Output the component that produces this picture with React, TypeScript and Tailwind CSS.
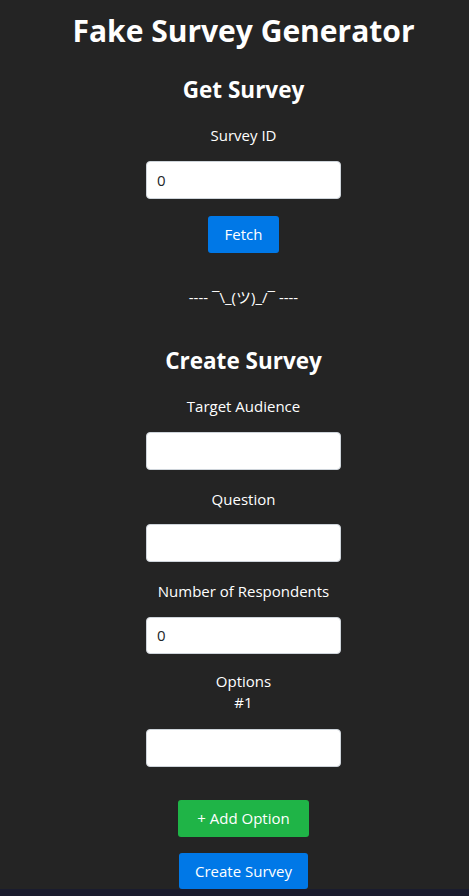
import React from "react";

const font = { fontFamily: '"Open Sans", "Noto Sans CJK JP", sans-serif' };

function Label({ children, className = "" }: { children: React.ReactNode; className?: string }) {
  return <div className={`text-[15px] leading-[22px] text-white ${className}`}>{children}</div>;
}

function Input({ value = "", className = "" }: { value?: string; className?: string }) {
  return (
    <input
      readOnly
      value={value}
      className={`w-[195px] h-[38px] rounded-[4px] border border-[#ced4da] bg-white px-[10px] text-[15px] text-[#212529] outline-none ${className}`}
      style={font}
    />
  );
}

export default function App() {
  return (
    <div className="min-h-[896px] bg-[#1a1c2e]" style={font}>
      <div className="h-[889px] bg-[#242424] pl-[18px] flex flex-col items-center text-center">
        <h1 className="mt-[11px] text-[30px] leading-[40px] font-bold text-white">Fake Survey Generator</h1>
        <h2 className="mt-[23px] text-[22.5px] leading-[32px] font-bold text-white">Get Survey</h2>
        <Label className="mt-[18px]">Survey ID</Label>
        <Input value="0" className="mt-[15px]" />
        <button className="mt-[17px] h-[37px] w-[71px] rounded-[3px] bg-[#0078e7] text-white text-[15px]">Fetch</button>
        <Label className="mt-[33px]">---- ¯\_(ツ)_/¯ ----</Label>
        <h2 className="mt-[37px] text-[22.5px] leading-[32px] font-bold text-white">Create Survey</h2>
        <Label className="mt-[18px]">Target Audience</Label>
        <Input className="mt-[15px]" />
        <Label className="mt-[18px]">Question</Label>
        <Input className="mt-[14px]" />
        <Label className="mt-[18px]">Number of Respondents</Label>
        <Input value="0" className="mt-[15px]" />
        <div className="mt-[17px] text-[15px] leading-[21px] text-white">
          <div>Options</div>
          <div>#1</div>
        </div>
        <Input className="mt-[16px]" />
        <button className="mt-[33px] h-[37px] w-[131px] rounded-[3px] bg-[#1fb447] text-white text-[15px]">+ Add Option</button>
        <button className="mt-[16px] h-[36px] w-[129px] rounded-[3px] bg-[#0078e7] text-white text-[15px]">Create Survey</button>
      </div>
    </div>
  );
}
